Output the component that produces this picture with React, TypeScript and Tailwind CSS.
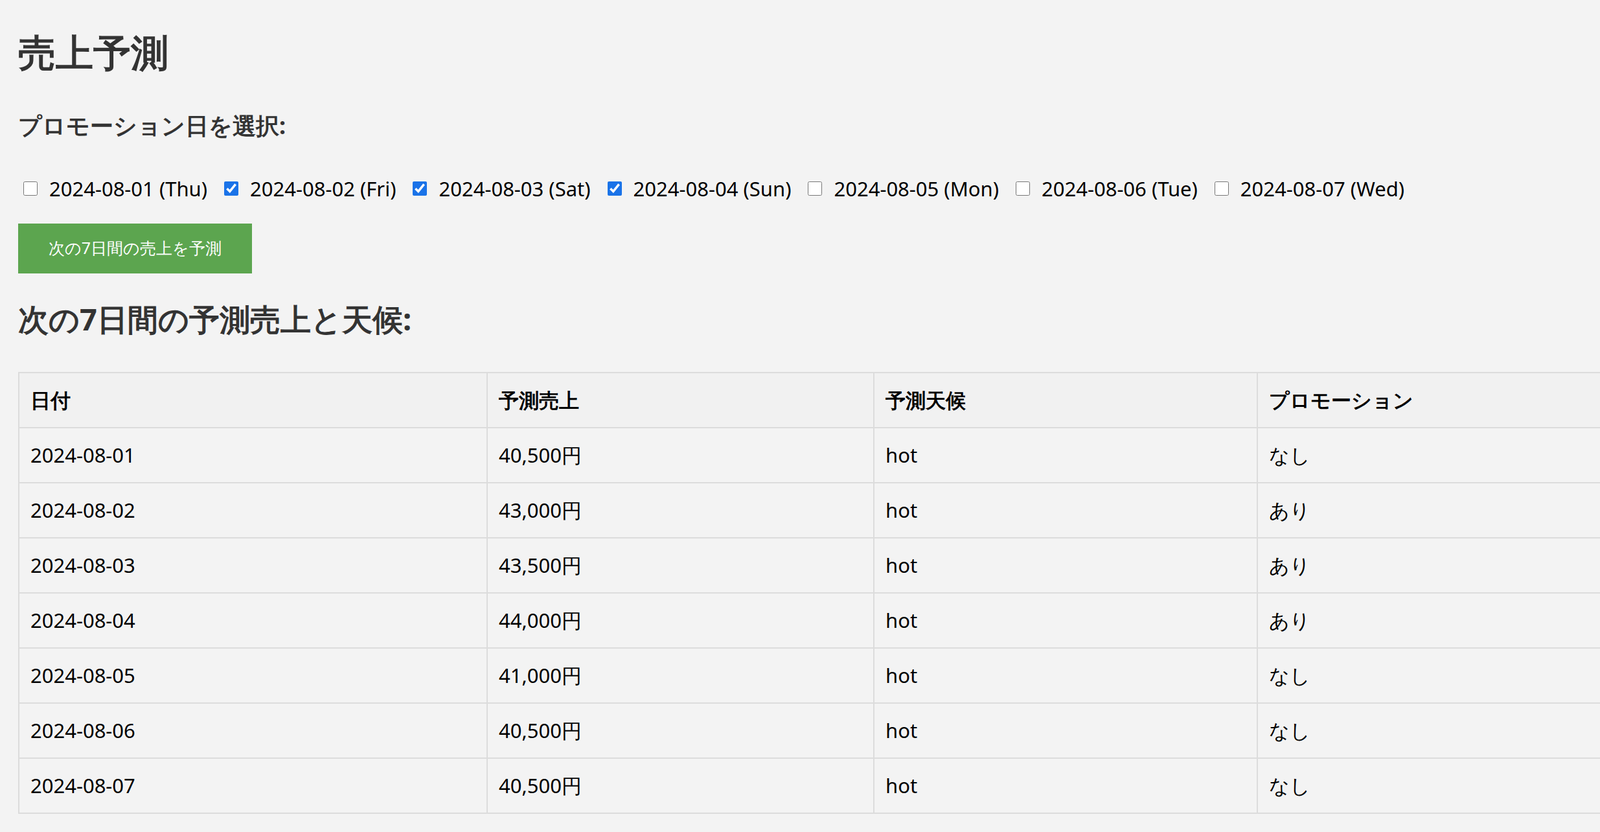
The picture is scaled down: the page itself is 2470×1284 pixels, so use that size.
const days = [
  { d: '2024-08-01', w: 'Thu', c: false, s: '40,500円', p: 'なし' },
  { d: '2024-08-02', w: 'Fri', c: true, s: '43,000円', p: 'あり' },
  { d: '2024-08-03', w: 'Sat', c: true, s: '43,500円', p: 'あり' },
  { d: '2024-08-04', w: 'Sun', c: true, s: '44,000円', p: 'あり' },
  { d: '2024-08-05', w: 'Mon', c: false, s: '41,000円', p: 'なし' },
  { d: '2024-08-06', w: 'Tue', c: false, s: '40,500円', p: 'なし' },
  { d: '2024-08-07', w: 'Wed', c: false, s: '40,500円', p: 'なし' },
]

export default function App() {
  return (
    <div className="min-h-[1284px] w-[2470px] overflow-hidden bg-[#f3f3f3] px-[28px] pt-[40px] font-['Liberation_Sans','Noto_Sans_CJK_JP',sans-serif] text-[#333]">
      <h1 className="text-[58px] font-bold leading-[80px]">売上予測</h1>
      <h3 className="mt-[50px] text-[36px] font-bold leading-[48px]">プロモーション日を選択:</h3>

      {/* promo day checkboxes */}
      <div className="mt-[50px] flex items-center text-[31px] text-black">
        {days.map((x) => (
          <label key={x.d} className="ml-[8px] mr-[18px] flex items-center gap-[18px]">
            <input type="checkbox" defaultChecked={x.c} className="h-[22px] w-[22px] accent-[#1a73e8]" />
            {x.d} ({x.w})
          </label>
        ))}
      </div>

      <button className="mt-[30px] h-[77px] w-[361px] bg-[#5ca54f] text-[25px] text-white">
        次の7日間の売上を予測
      </button>

      <h2 className="mt-[38px] text-[47px] font-bold leading-[64px]">次の7日間の予測売上と天候:</h2>

      <table className="mt-[50px] w-[2480px] border-collapse text-[31px] text-black">
        <thead>
          <tr className="h-[85px] bg-[#f1f1f1] text-left">
            <th className="w-[723px] border-2 border-[#dcdcdc] px-[17px] font-bold">日付</th>
            <th className="w-[597px] border-2 border-[#dcdcdc] px-[17px] font-bold">予測売上</th>
            <th className="w-[592px] border-2 border-[#dcdcdc] px-[17px] font-bold">予測天候</th>
            <th className="border-2 border-[#dcdcdc] px-[17px] font-bold">プロモーション</th>
          </tr>
        </thead>
        <tbody>
          {days.map((x) => (
            <tr key={x.d} className="h-[85px]">
              <td className="border-2 border-[#dcdcdc] px-[17px]">{x.d}</td>
              <td className="border-2 border-[#dcdcdc] px-[17px]">{x.s}</td>
              <td className="border-2 border-[#dcdcdc] px-[17px]">hot</td>
              <td className="border-2 border-[#dcdcdc] px-[17px]">{x.p}</td>
            </tr>
          ))}
        </tbody>
      </table>
    </div>
  )
}
